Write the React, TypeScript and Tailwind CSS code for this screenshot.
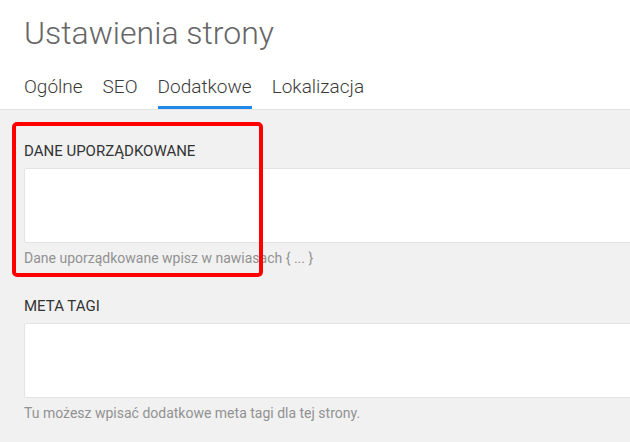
export default function App() {
  const tabs = ["Ogólne", "SEO", "Dodatkowe", "Lokalizacja"];
  const active = "Dodatkowe";

  return (
    <div className="relative w-[630px] h-[442px] overflow-hidden bg-[#f1f1f1] font-['Roboto',sans-serif]">
      <header className="bg-white border-b border-[#e2e2e2] pl-6">
        <h1 className="pt-[13px] text-[32px] leading-[40px] font-light text-[#666]">
          Ustawienia strony
        </h1>
        <nav className="mt-[22px] flex gap-5">
          {tabs.map((t) => (
            <div
              key={t}
              className={
                t === active
                  ? "pb-[7px] border-b-[3px] border-[#2189e8] text-[19px] leading-6 font-light text-[#3a3a3a]"
                  : "pb-[7px] border-b-[3px] border-transparent text-[19px] leading-6 font-light text-[#3a3a3a]"
              }
            >
              {t}
            </div>
          ))}
        </nav>
      </header>

      <main className="pl-6 pt-[31px]">
        <section>
          <label className="block text-[15px] leading-5 text-[#333]">DANE UPORZĄDKOWANE</label>
          <textarea className="mt-[7px] block w-[640px] h-[75px] bg-white border border-[#e3e3e3] rounded-[2px] resize-none" />
          <p className="mt-[6px] text-[14px] leading-[18px] text-[#919191]">
            Dane uporządkowane wpisz w nawiasach {"{ ... }"}
          </p>
        </section>

        <section className="mt-[29px]">
          <label className="block text-[15px] leading-5 text-[#333]">META TAGI</label>
          <textarea className="mt-[7px] block w-[640px] h-[75px] bg-white border border-[#e3e3e3] rounded-[2px] resize-none" />
          <p className="mt-[6px] text-[14px] leading-[18px] text-[#919191]">
            Tu możesz wpisać dodatkowe meta tagi dla tej strony.
          </p>
        </section>
      </main>

      {/* red annotation frame */}
      <div className="absolute left-[12px] top-[122px] w-[251px] h-[155px] border-4 border-[#ff0000] rounded-[5px] pointer-events-none" />
    </div>
  );
}
